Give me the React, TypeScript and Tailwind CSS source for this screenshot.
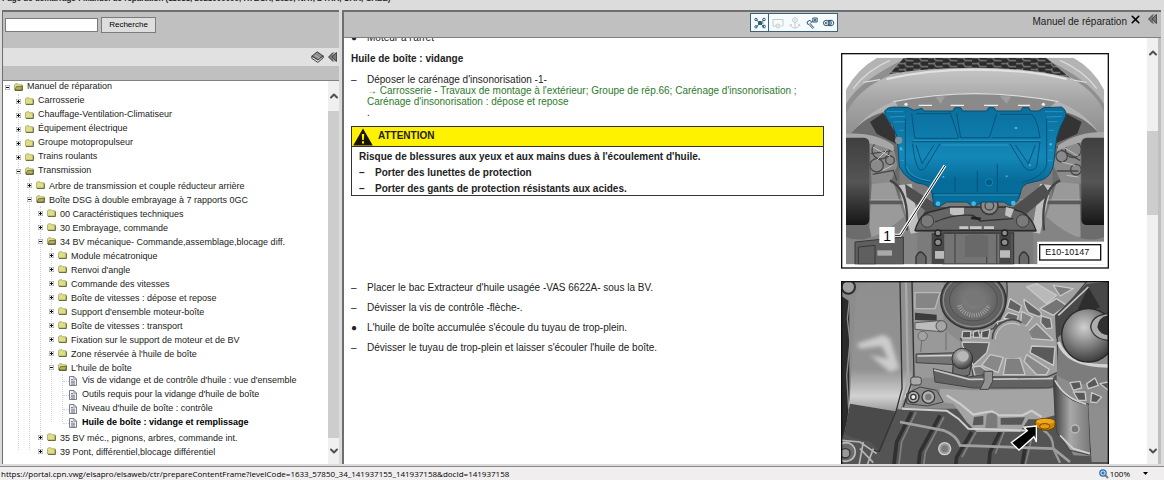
import type { ReactNode } from 'react';
import { useState } from 'react';
import { ChevronDown, ChevronUp, X } from 'lucide-react';

interface TreeNode {
    label: string;
    kind?: 'folder' | 'doc';
    children?: TreeNode[];
    selected?: boolean;
}

const TREE: TreeNode[] = [
    {
        label: 'Manuel de réparation',
        children: [
            { label: 'Carrosserie' },
            { label: 'Chauffage-Ventilation-Climatiseur' },
            { label: 'Équipement électrique' },
            { label: 'Groupe motopropulseur' },
            { label: 'Trains roulants' },
            {
                label: 'Transmission',
                children: [
                    { label: 'Arbre de transmission et couple réducteur arrière' },
                    {
                        label: 'Boîte DSG à double embrayage à 7 rapports 0GC',
                        children: [
                            { label: '00 Caractéristiques techniques' },
                            { label: '30 Embrayage, commande' },
                            {
                                label: '34 BV mécanique- Commande,assemblage,blocage diff.',
                                children: [
                                    { label: 'Module mécatronique' },
                                    { label: "Renvoi d'angle" },
                                    { label: 'Commande des vitesses' },
                                    { label: 'Boîte de vitesses : dépose et repose' },
                                    { label: "Support d'ensemble moteur-boîte" },
                                    { label: 'Boîte de vitesses : transport' },
                                    { label: 'Fixation sur le support de moteur et de BV' },
                                    { label: "Zone réservée à l'huile de boîte" },
                                    {
                                        label: "L'huile de boîte",
                                        children: [
                                            { label: "Vis de vidange et de contrôle d'huile : vue d'ensemble", kind: 'doc' },
                                            { label: "Outils requis pour la vidange d'huile de boîte", kind: 'doc' },
                                            { label: "Niveau d'huile de boîte : contrôle", kind: 'doc' },
                                            { label: 'Huile de boîte : vidange et remplissage', kind: 'doc', selected: true },
                                        ],
                                    },
                                ],
                            },
                            { label: '35 BV méc., pignons, arbres, commande int.' },
                            { label: '39 Pont, différentiel,blocage différentiel' },
                        ],
                    },
                ],
            },
        ],
    },
];

const FolderIcon = ({ open }: { open: boolean }) => (
    <svg viewBox="0 0 9 8" className="w-[9px] h-2 shrink-0">
        <path d="M0.5 2 L1.5 0.8 H4 L5 1.8 H8 V7 H0.5Z" fill="#dede84" stroke="#9c9c5a" strokeWidth="0.7" />
        <path d="M8.4 2.4 V7.5 H1" fill="none" stroke="#4c4c30" strokeWidth="0.8" />
        {open && <path d="M1 7 L2.4 3.6 H8.6 L7.6 7Z" fill="#b4b45c" stroke="#54542c" strokeWidth="0.7" />}
    </svg>
);

const DocIcon = () => (
    <svg viewBox="0 0 8 10" className="w-2 h-[10px] shrink-0">
        <path d="M0.5 0.5 H5 L7.5 3 V9.5 H0.5Z" fill="#f2f3f8" stroke="#6d7080" strokeWidth="0.9" />
        <path d="M4.8 0.6 V3.2 H7.4" fill="none" stroke="#6d7080" strokeWidth="0.7" />
        <path d="M2 3.5 H4 M2 5.2 H6 M2 6.8 H6 M2 8.2 H6" stroke="#4d5060" strokeWidth="0.7" />
    </svg>
);

const ExpandIcon = ({ open }: { open: boolean }) => (
    <svg viewBox="0 0 5 5" className="w-[5px] h-[5px] shrink-0">
        <rect x="0.3" y="0.3" width="4.4" height="4.4" fill="#fff" stroke="#9a9a9a" strokeWidth="0.6" />
        <path d={open ? 'M1 2.5H4' : 'M1 2.5H4M2.5 1V4'} stroke="#111" strokeWidth="1" />
    </svg>
);

const TreeItem = ({ node, level }: { node: TreeNode; level: number }) => {
    const [open, setOpen] = useState(true);
    const isDoc = node.kind === 'doc';
    const expanded = !!node.children && open;

    return (
        <li className="relative">
            <div className="flex h-[14px] items-start">
                {isDoc ? (
                    <span className="flex h-[14px] w-[22px] shrink-0 items-center justify-end pr-[5px]">
                        <span className="w-[6px] border-t border-dotted border-gray-300" />
                        <DocIcon />
                    </span>
                ) : (
                    <button
                        type="button"
                        aria-label={node.label}
                        aria-expanded={expanded}
                        onClick={() => setOpen(!open)}
                        className="flex h-[14px] w-[22px] shrink-0 items-center gap-1"
                    >
                        <ExpandIcon open={expanded} />
                        <FolderIcon open={expanded} />
                    </button>
                )}
                <a
                    href="#contenu"
                    className={`whitespace-nowrap ${isDoc || level < 2 ? 'leading-[12px]' : 'leading-[16px]'} ${node.selected ? 'font-bold text-black' : 'text-[#222]'}`}
                >
                    {node.label}
                </a>
            </div>
            {expanded && <TreeList nodes={node.children!} level={level + 1} />}
        </li>
    );
};

const TreeList = ({ nodes, level }: { nodes: TreeNode[]; level: number }) => (
    <ul className={`relative ${level > 0 ? 'ml-[11px] before:absolute before:top-0 before:bottom-2 before:left-[2px] before:border-l before:border-dotted before:border-gray-300' : ''}`}>
        {nodes.map((n) => (
            <TreeItem key={n.label} node={n} level={level} />
        ))}
    </ul>
);

// Scroll track with its two arrows; children is the space before and after the thumb
const ScrollBar = ({ children }: { children: ReactNode }) => (
    <div className="flex w-[11px] shrink-0 flex-col items-center bg-[#f0f0f0]" aria-hidden="true">
        <span className="flex h-[30px] shrink-0 items-center">
            <ChevronUp className="h-3 w-3 text-[#505050]" strokeWidth={4} />
        </span>
        <div className="flex w-full flex-1 flex-col">{children}</div>
        <span className="flex h-[26px] shrink-0 items-center">
            <ChevronDown className="h-3 w-3 text-[#505050]" strokeWidth={4} />
        </span>
    </div>
);

const CollapseIcon = () => (
    <svg viewBox="0 0 9 10" className="h-[10px] w-[9px]">
        <path d="M5 0.5 L0.5 5 L5 9.5 H8.5 V0.5Z" fill="#a0a0a0" />
        <path d="M5 0.5 L0.5 5 L5 9.5 M8.5 0.5 L4 5 L8.5 9.5Z" fill="#777" stroke="#444" strokeWidth="0.9" />
    </svg>
);

const BookIcon = () => (
    <svg viewBox="0 0 13 12" className="h-3 w-[13px]">
        <path d="M0.8 5.2 L6.2 0.8 L12.2 5 L7 9Z" fill="#8d8d8d" stroke="#333" strokeWidth="0.9" />
        <path d="M0.8 5.2 V7.4 L6.8 11.4 L12.2 7 V5 L7 9Z" fill="#ddd" stroke="#333" strokeWidth="0.9" />
        <path d="M4 4.2 L8.6 7" stroke="#bbb" strokeWidth="0.8" />
    </svg>
);

const TOOLS: { name: string; icon: ReactNode; off?: boolean }[] = [
    {
        name: 'Arborescence',
        icon: (
            <>
                <path d="M2.5 3 L6 6 L10 3 M6 6 L2.5 10 M6 6 L10 10 M6 6 H9.5" />
                <circle cx="2" cy="2.5" r="1.2" />
                <circle cx="6" cy="6" r="1.6" fill="currentColor" />
                <circle cx="10" cy="2.5" r="1.3" />
                <circle cx="2" cy="9.8" r="1.2" />
                <circle cx="10" cy="9.5" r="1.4" />
            </>
        ),
    },
    {
        name: 'Véhicule',
        off: true,
        icon: <path d="M3 9 H1 V2.5 H11 V9 H9.5 M4 9 a1.8 1.8 0 1 0 4 0 a1.8 1.8 0 1 0 -4 0 M4 9 H3 M5.5 9 H7" />,
    },
    {
        name: 'Ancrage',
        off: true,
        icon: (
            <>
                <circle cx="6" cy="3" r="2.4" />
                <path d="M5 3 H7 M6 5.4 V11 M1.5 7.5 C2 10 4 11 6 11 C8 11 10 10 10.5 7.5 M1 9 L1.5 7.5 L3 8 M11 9 L10.5 7.5 L9 8" />
            </>
        ),
    },
    {
        name: 'Outillage',
        icon: (
            <>
                <path d="M1 5 L4 3.2 L5.6 5.2 L4.2 6.6 L7.6 10.4 L6.6 11.4 L3 7.4 L1.6 7.2Z" />
                <path d="M6.8 1 H11.2 V5 H6.8Z M8.2 2.4 H9.8 V3.7 H8.2Z M6.8 4.4 L5.4 5.4" />
            </>
        ),
    },
    {
        name: 'Pièces',
        icon: (
            <>
                <circle cx="3.2" cy="6" r="2.7" />
                <circle cx="3.2" cy="6" r="0.9" />
                <path d="M5 3.4 A2.7 2.7 0 0 1 5 8.6 M6.4 3.4 A2.7 2.7 0 0 1 6.4 8.6 M8.8 3.4 A2.7 2.7 0 0 1 8.8 8.6 M5 3.4 H9 M5 8.6 H9" />
            </>
        ),
    },
];

const Toolbar = () => (
    <div className="flex h-[19px] border border-[#3b6277] bg-[#f6fbfd]">
        {TOOLS.map((t, i) => (
            <button
                key={t.name}
                type="button"
                aria-label={t.name}
                disabled={t.off}
                className={`flex items-center justify-center ${i === 0 ? 'w-[18px] border-r border-[#3b6277]' : 'w-[17px]'} ${t.off ? 'text-[#c6cacd]' : 'text-[#2f5870]'}`}
            >
                <svg viewBox="0 0 12 12" className="h-3 w-3" fill="none" stroke="currentColor" strokeWidth="1">
                    {t.icon}
                </svg>
            </button>
        ))}
    </div>
);

const UnderbodyFigure = () => (
    <svg viewBox="3 8 804 648" className="block w-full" role="img" aria-label="Carénage d'insonorisation">
        <defs>
            <linearGradient id="bumper" x1="0" y1="0" x2="0" y2="1">
                <stop offset="0" stopColor="#c6c6c6" />
                <stop offset="0.45" stopColor="#a4a4a4" />
                <stop offset="1" stopColor="#8b8b8b" />
            </linearGradient>
            <linearGradient id="plate" x1="0" y1="0" x2="0" y2="1">
                <stop offset="0" stopColor="#0a6f9e" />
                <stop offset="0.33" stopColor="#0f7dad" />
                <stop offset="0.5" stopColor="#1488b9" />
                <stop offset="0.75" stopColor="#066b98" />
                <stop offset="1" stopColor="#07709f" />
            </linearGradient>
            <linearGradient id="tyre" x1="0" y1="0" x2="0" y2="1">
                <stop offset="0" stopColor="#3f3f3f" />
                <stop offset="0.5" stopColor="#555" />
                <stop offset="1" stopColor="#161616" />
            </linearGradient>
            <pattern id="mesh" width="44" height="18" patternUnits="userSpaceOnUse">
                <rect width="44" height="18" fill="#2c2c2c" />
                <path d="M0 4 H18 L24 13 H44 M18 4 L24 -4 M0 13 L-4 18" stroke="#858585" strokeWidth="3.4" fill="none" />
            </pattern>
            <clipPath id="photo">
                <rect x="18" y="22" width="774" height="620" />
            </clipPath>
        </defs>
        <rect x="5" y="10" width="800" height="643" fill="#fff" stroke="#111" strokeWidth="4" />
        <g clipPath="url(#photo)">
            <rect x="18" y="180" width="774" height="462" fill="#7b7b7b" />
            <path d="M18 118 Q52 55 112 22 H700 Q760 55 792 118 V290 H18Z" fill="#b3b3b3" />
            <path d="M18 160 Q60 90 190 28 L150 75 Q60 110 18 200Z" fill="#8f8f8f" />
            <path d="M792 160 Q750 90 620 28 L690 80 Q750 110 792 200Z" fill="#8f8f8f" />
            <path d="M40 115 Q80 60 150 30 M770 115 Q730 60 660 30 M70 96 L120 88 M740 96 L690 88" stroke="#d9d9d9" strokeWidth="4" fill="none" />
            <path d="M192 22 H618 L690 82 Q560 52 405 52 Q250 52 148 72Z" fill="url(#mesh)" />
            <path d="M18 190 Q55 115 135 85 Q260 54 405 54 Q560 54 685 84 Q760 112 792 185 V275 Q750 190 650 152 Q520 126 405 126 Q290 126 165 152 Q65 190 18 275Z" fill="url(#bumper)" />
            <path d="M140 86 Q260 58 405 58 Q560 58 680 86" stroke="#e2e2e2" strokeWidth="6" fill="none" />
            <path d="M165 150 Q290 128 405 128 Q530 128 650 152 L620 182 H180Z" fill="#8a8a8a" />
            <path d="M160 154 Q290 130 405 130 Q530 130 655 154" stroke="#dadada" strokeWidth="4" fill="none" />
            <path d="M285 138 L315 138 L302 160Z M480 138 L515 138 L500 160Z" fill="#9f9f9f" />
            {/* wheel housings */}
            <path d="M18 270 Q60 205 130 185 Q170 230 178 300 L180 640 H18Z" fill="#6c6c6c" />
            <path d="M792 270 Q750 205 675 185 Q650 230 640 300 L630 640 H792Z" fill="#6c6c6c" />
            <path d="M90 215 L130 188 L165 245 L168 280 L110 250Z M725 215 L680 190 L648 250 L645 280 L712 250Z" fill="#343434" />
            <path d="M88 270 L160 285 L172 345 L150 400 L95 400Z M722 270 L655 285 L640 345 L665 400 L722 400Z" fill="#8a8a8a" />
            <g fill="none" stroke="#484848" strokeWidth="4">
                <circle cx="122" cy="300" r="26" />
                <circle cx="110" cy="345" r="20" />
                <circle cx="150" cy="330" r="13" />
                <circle cx="700" cy="298" r="24" />
                <circle cx="665" cy="318" r="17" />
                <circle cx="708" cy="358" r="16" />
                <path d="M92 310 L165 300 M98 372 L160 360 L170 390 M650 290 L720 330 M650 362 H715" />
            </g>
            <g stroke="#c0c0c0" strokeWidth="3" fill="none">
                <path d="M98 290 L150 318 M110 330 L140 300 M128 360 L158 345 M670 290 L715 318 M665 335 L705 345 M680 375 L715 380" />
            </g>
            <path d="M18 250 Q110 245 160 285 L162 305 Q100 270 18 276Z" fill="#a7a7a7" />
            <path d="M792 245 Q710 245 655 285 L652 302 Q710 270 792 268Z" fill="#a7a7a7" />
            <path d="M95 400 L160 395 L200 520 L160 560 Q120 575 95 565 L88 530Z" fill="#9a9a9a" />
            <path d="M718 400 L650 395 L615 510 L650 560 Q700 575 722 560Z" fill="#9a9a9a" />
            <path d="M88 450 H270 V462 H88Z M540 450 H725 V462 H540Z" fill="#5a5a5a" />
            <path d="M88 449 H270 M540 449 H725" stroke="#bdbdbd" strokeWidth="2" />
            <rect x="5" y="262" width="83" height="262" rx="16" fill="url(#tyre)" />
            <rect x="724" y="262" width="84" height="262" rx="16" fill="url(#tyre)" />
            {/* lower floor */}
            <path d="M18 560 Q90 590 190 500 L232 550 V642 H18Z" fill="#848484" />
            <path d="M792 560 Q720 590 620 500 L580 550 V642 H792Z" fill="#848484" />
            <path d="M45 575 L190 560 V642 H45Z M55 590 L105 585 V642 H55Z" fill="#5f5f5f" stroke="#383838" strokeWidth="3" />
            <rect x="112" y="600" width="44" height="16" fill="#aaa" />
            <path d="M175 405 L215 400 L240 545 L212 550Z M635 405 L600 400 L575 545 L600 550Z" fill="#c0c0c0" />
            <path d="M150 390 Q210 420 200 540 M660 390 Q600 420 612 540" stroke="#444" strokeWidth="7" fill="none" />
            <path d="M195 400 L300 470 H520 L610 400 L630 430 L560 490 L590 545 H225 L255 480 L200 440Z" fill="#4f4f4f" />
            <path d="M225 540 Q240 490 270 485 L330 470 H500 L545 485 Q575 500 588 540Z" fill="#666" stroke="#2c2c2c" strokeWidth="4" />
            <circle cx="262" cy="512" r="19" fill="#7a7a7a" stroke="#3c3c3c" strokeWidth="3" />
            <circle cx="548" cy="512" r="19" fill="#7a7a7a" stroke="#3c3c3c" strokeWidth="3" />
            <path d="M330 472 H372 V492 Q350 500 330 490Z M498 470 L522 476 L512 502 L495 495Z" fill="#c2c2c2" />
            <path d="M285 515 Q340 490 400 495 L420 512 L520 505" stroke="#333" strokeWidth="4" fill="none" />
            <path d="M358 528 H385 V536 H358Z M390 528 H425 V536 H390Z M432 528 H462 V536 H432Z" fill="#c8c8c8" />
            <path d="M396 498 L424 502 L420 510 L392 506Z" fill="#222" />
            <path d="M310 548 H520 V642 H310Z" fill="#747474" stroke="#353535" strokeWidth="5" />
            <path d="M345 550 V642 M375 560 H440 V642 M470 548 V642" stroke="#4b4b4b" strokeWidth="4" fill="none" />
            <path d="M375 558 Q410 546 445 558 V620 H375Z" fill="#696969" />
            <path d="M275 548 H312 V642 H275Z M478 548 H515 V642 H478Z" fill="#474747" />
            <g fill="#8c8c8c" stroke="#222" strokeWidth="4">
                <circle cx="294" cy="548" r="9" />
                <circle cx="294" cy="576" r="10" />
                <circle cx="494" cy="548" r="9" />
                <circle cx="494" cy="576" r="10" />
            </g>
            <path d="M228 642 V620 Q240 590 258 620 V642 M538 642 V620 Q550 590 566 620 V642" fill="#686868" stroke="#333" strokeWidth="4" />
            <path d="M285 602 H312 V625 H285Z M480 600 H510 V622 H480Z" fill="#bababa" />
            <circle cx="448" cy="466" r="26" fill="#8b8b8b" stroke="#3c3c3c" strokeWidth="5" />
            <circle cx="448" cy="466" r="13" fill="none" stroke="#444" strokeWidth="4" />
            {/* protection plate */}
            <path
                d="M134 182 Q142 170 165 170 L205 172 L222 180 L246 174 L252 182 H338 L344 172 H362 L368 182 H440 L446 172 H462 L468 182 H542 L548 172 H566 L572 182 H596 L612 172 L664 170 Q680 178 677 198 Q660 225 650 262 L640 345 Q632 378 608 388 L560 400 Q542 410 542 428 Q534 462 508 466 L492 455 H425 L410 466 H395 L380 455 H320 L300 468 H282 L276 430 Q272 408 252 402 Q205 398 178 350 L172 262 L158 225 Q134 205 134 182Z"
                fill="url(#plate)"
                stroke="#064f70"
                strokeWidth="3"
            />
            <g fill="none" stroke="#07557a" strokeWidth="3">
                <path d="M196 205 V352 Q205 388 270 396 M620 205 V345 Q610 380 548 396" />
                <path d="M215 190 Q222 250 225 264 H350 L356 262 L330 186 M228 190 H330 M350 188 L362 262 H448 L470 190 M480 192 H575 Q590 200 600 262 H455" />
                <path d="M215 274 H600 L590 350 Q570 370 552 350 L510 280 M218 280 Q222 330 236 356 Q246 365 256 352 L300 280" />
                <path d="M228 284 L246 340 L282 284 M526 284 L565 340 L586 284" />
                <path d="M276 430 H542 M345 380 V425 M412 362 V425 M472 340 V425" />
            </g>
            <g fill="none" stroke="#3aa6d0" strokeWidth="2">
                <path d="M140 184 H190 M148 200 L195 198 M160 215 L195 214 M615 184 H668 M620 200 L665 198 M622 214 L652 214" />
                <path d="M218 270 H602 M305 284 H505 M200 350 Q210 384 272 392 M282 434 H536 M178 240 H192 M178 300 H192 M180 330 H192 M626 240 H642 M626 300 H640 M624 330 H638" />
            </g>
            <g fill="#4db4dc">
                <circle cx="528" cy="233" r="4" />
                <circle cx="294" cy="460" r="7" />
                <circle cx="401" cy="460" r="7" />
                <circle cx="520" cy="458" r="7" />
                <circle cx="310" cy="379" r="3" />
                <circle cx="500" cy="378" r="3" />
                <circle cx="570" cy="345" r="3" />
                <circle cx="632" cy="282" r="4" />
                <circle cx="183" cy="295" r="4" />
            </g>
            <circle cx="447" cy="396" r="11" fill="#055a82" stroke="#0b8dc0" strokeWidth="3" />
            <circle cx="176" cy="270" r="11" fill="#7c949e" />
            <path d="M236 165 H276 M332 165 H372 M432 165 H474 M534 165 H570" stroke="#eee" strokeWidth="4" />
            <circle cx="198" cy="162" r="5" fill="#eee" />
            <circle cx="610" cy="162" r="5" fill="#eee" />
            <path d="M165 555 H180 L315 346" fill="none" stroke="#fff" strokeWidth="9" />
            <path d="M165 555 H181 L315 346" fill="none" stroke="#111" strokeWidth="3" />
        </g>
        <rect x="118" y="530" width="46" height="48" fill="#fff" />
        <text x="130" y="571" fontSize="42" fill="#000" className="font-['Liberation_Sans',Arial,sans-serif]">1</text>
        <rect x="592" y="574" width="200" height="68" fill="#fff" />
        <rect x="599" y="583" width="183" height="46" fill="#fff" stroke="#111" strokeWidth="4" />
        <text x="616" y="615" fontSize="27" fill="#111" className="font-['Liberation_Sans',Arial,sans-serif]">E10-10147</text>
    </svg>
);

const GearboxFigure = () => (
    <svg viewBox="3 17 804 648" className="block w-full" role="img" aria-label="Vis de contrôle de la boîte">
        <defs>
            <linearGradient id="cover" x1="0" y1="0" x2="0" y2="1">
                <stop offset="0" stopColor="#8f8f8f" />
                <stop offset="0.55" stopColor="#929292" />
                <stop offset="0.72" stopColor="#d2d2d2" />
                <stop offset="0.84" stopColor="#8c8c8c" />
                <stop offset="1" stopColor="#555" />
            </linearGradient>
            <radialGradient id="ball" cx="0.42" cy="0.35" r="0.7">
                <stop offset="0" stopColor="#d0d0d0" />
                <stop offset="0.5" stopColor="#828282" />
                <stop offset="1" stopColor="#333" />
            </radialGradient>
            <radialGradient id="disc" cx="0.5" cy="0.5" r="0.5">
                <stop offset="0" stopColor="#858585" />
                <stop offset="0.5" stopColor="#707070" />
                <stop offset="0.9" stopColor="#5c5c5c" />
                <stop offset="1" stopColor="#4a4a4a" />
            </radialGradient>
            <linearGradient id="tube" x1="0" y1="0" x2="1" y2="0">
                <stop offset="0" stopColor="#3a3a3a" />
                <stop offset="0.45" stopColor="#a8a8a8" />
                <stop offset="1" stopColor="#777" />
            </linearGradient>
            <filter id="soft">
                <feGaussianBlur stdDeviation="6" />
            </filter>
        </defs>
        <rect x="5" y="19" width="800" height="643" fill="#8c8c8c" />
        {/* lower ribs */}
        <path d="M160 400 H640 L700 540 L805 545 V662 H5 V470Z" fill="#545454" />
        <path d="M215 410 L170 500 L150 662 M300 420 L240 530 L225 662 M395 470 L350 545 L335 662 M480 470 L450 530 L440 662 M560 490 L530 662" stroke="#303030" strokeWidth="11" fill="none" />
        <path d="M228 410 L185 500 L165 662 M312 425 L256 530 L240 662 M408 470 L366 545 M492 470 L466 535 M575 490 L548 600" stroke="#808080" strokeWidth="5" fill="none" />
        <path d="M180 440 L310 465 Q350 480 360 510 L640 520 L690 560" stroke="#a0a0a0" strokeWidth="8" fill="none" />
        <circle cx="314" cy="520" r="18" fill="#9b9b9b" stroke="#d0d0d0" strokeWidth="4" />
        <circle cx="314" cy="520" r="10" fill="#7b7b7b" />
        {/* left cover */}
        <path d="M5 60 L28 75 V400 Q20 450 10 480 L5 490Z" fill="#2b2b2b" />
        <path d="M5 60 L28 75 L22 130 L30 200 L20 300 L26 400" stroke="#8d8d8d" strokeWidth="4" fill="none" />
        <path d="M48 50 L80 20 H200 L218 260 L214 340 L168 408 L100 495 Q30 500 18 470 L30 360Z" fill="url(#cover)" />
        <path d="M30 385 L165 408 L118 528 L90 498 Q20 490 14 470Z" fill="#4a4a4a" />
        <path d="M180 20 L186 340 L168 408 L118 528 L100 525 M216 20 L222 300 L190 395" stroke="#333" strokeWidth="4" fill="none" />
        <path d="M198 20 L204 320 L178 402" stroke="#a9a9a9" strokeWidth="7" fill="none" />
        <path d="M50 205 L130 178 L150 190 L178 280 L150 290 L90 240 L145 250 L125 212 L60 220Z" fill="#e0e0e0" opacity="0.75" filter="url(#soft)" />
        <circle cx="25" cy="35" r="20" fill="#a0a0a0" stroke="#2e2e2e" strokeWidth="6" />
        <g stroke="#b4b4b4" strokeWidth="5" fill="none">
            <path d="M5 495 L60 500 L110 535 M60 520 L100 562 M70 500 L40 662 M100 520 L70 600" />
        </g>
        <circle cx="18" cy="530" r="28" fill="#6c6c6c" stroke="#bcbcbc" strokeWidth="5" />
        <circle cx="16" cy="534" r="14" fill="#999" stroke="#333" strokeWidth="4" />
        {/* casting behind the disc */}
        <path d="M220 19 H310 V160 L360 200 V300 L225 310Z" fill="#999" />
        <path d="M225 52 H300 L285 100 H225Z" fill="#858585" stroke="#b8b8b8" strokeWidth="4" />
        <path d="M225 112 L290 118 V136 L225 134Z" fill="#3c3c3c" />
        <path d="M225 142 L300 136 Q322 145 320 158 Q312 174 290 168 L225 162Z" fill="#bcbcbc" stroke="#5a5a5a" strokeWidth="3" />
        <circle cx="304" cy="152" r="16" fill="#a5a5a5" stroke="#555" strokeWidth="3" />
        <circle cx="248" cy="182" r="14" fill="#a2a2a2" stroke="#6b6b6b" strokeWidth="3" />
        <path d="M245 195 L242 230 M318 170 V225" stroke="#6d6d6d" strokeWidth="3" />
        {/* ribbed housing */}
        <path d="M500 19 H740 L650 130 L655 290 L620 305 H400 L395 270 L362 190 L460 160 Q510 100 500 19Z" fill="#a0a0a0" stroke="#444" strokeWidth="4" />
        <g fill="#626262" stroke="#c8c8c8" strokeWidth="4" strokeLinejoin="round">
            <path d="M552 72 L600 108 Q610 120 596 124 L566 112 Q552 95 552 72Z" />
            <path d="M604 122 L632 130 L636 158 L618 160 L602 142Z" />
            <path d="M510 70 L545 92 L538 112 L502 98Z" />
            <path d="M505 112 L535 120 L530 138 L490 128Z" />
            <path d="M545 108 L578 125 L558 152 L542 145Z" fill="#858585" />
            <path d="M590 145 L640 195 L575 190 L562 170Z" fill="#808080" />
            <path d="M575 212 L645 215 L640 270 L570 232Z" fill="#5a5a5a" />
            <path d="M560 238 L628 282 L618 298 L590 298 L552 258Z" fill="#8a8a8a" />
            <path d="M498 248 H540 L555 298 H490Z" fill="#808080" />
            <path d="M450 238 L490 246 L474 292 L425 270Z" fill="#888" />
            <path d="M366 200 L448 202 L440 232 L400 270 L368 212Z" fill="#5a5a5a" />
            <path d="M398 275 L420 272 L460 300 H405Z" fill="#757575" />
            <path d="M368 168 H392 V188 H366Z M400 170 L415 165 L420 186 H400Z M425 168 L450 162 L445 188 H425Z" fill="#505050" />
            <path d="M470 140 L500 132 L530 142 L505 150 L480 160Z" />
            <path d="M560 35 L590 25 L650 60 L620 85Z" fill="#b9b9b9" />
            <path d="M600 100 L650 70 L680 90 L640 120Z" fill="#757575" />
            <path d="M640 30 L700 40 L660 62Z" fill="#808080" />
        </g>
        <circle cx="515" cy="192" r="58" fill="#9f9f9f" />
        <path d="M457 192 A58 58 0 0 1 545 142" fill="none" stroke="#4a4a4a" strokeWidth="5" />
        <path d="M466 192 A50 50 0 0 1 540 150" fill="none" stroke="#ccc" strokeWidth="3" />
        <ellipse cx="400" cy="75" rx="98" ry="87" fill="url(#disc)" stroke="#333" strokeWidth="4" />
        <ellipse cx="400" cy="75" rx="90" ry="79" fill="none" stroke="#8c8c8c" strokeWidth="4" />
        <ellipse cx="400" cy="75" rx="72" ry="62" fill="none" stroke="#505050" strokeWidth="3" />
        <path d="M358 90 A46 42 0 0 0 446 90" fill="none" stroke="#a0a0a0" strokeWidth="14" strokeDasharray="3 4" />
        <ellipse cx="404" cy="68" rx="27" ry="25" fill="#777" />
        {/* lever and round cap */}
        <path d="M228 236 L350 232 V268 L228 262Z" fill="#757575" stroke="#444" strokeWidth="3" />
        <path d="M232 242 L345 240" stroke="#d0d0d0" strokeWidth="5" />
        <path d="M340 250 H397 L388 298 Q360 312 338 296Z" fill="#707070" stroke="#333" strokeWidth="3" />
        <circle cx="367" cy="250" r="31" fill="url(#ball)" stroke="#333" strokeWidth="3" />
        <circle cx="370" cy="243" r="16" fill="#b8b8b8" />
        <path d="M280 280 L385 305 L450 295 V310 H640 L648 300 V325 Q640 340 610 338 H400 L285 320Z" fill="#626262" stroke="#444" strokeWidth="3" />
        <path d="M282 284 L388 312 L640 310" stroke="#c8c8c8" strokeWidth="5" fill="none" />
        <path d="M432 288 H458 V318 L445 342 H420 L432 318Z" fill="#929292" stroke="#444" strokeWidth="3" />
        {/* oil pan wall */}
        <path d="M300 340 L400 345 L640 340 L645 420 L600 432 H565 L540 470 H410 L380 440 L340 385 L300 380Z" fill="#a4a4a4" />
        <path d="M185 400 L320 406 L355 430 L385 460 L580 466" stroke="#cfcfcf" strokeWidth="6" fill="none" />
        <path d="M320 360 L360 385 L400 418 L430 412 L455 408 L475 420 L548 420 L575 406 L605 425" stroke="#ccc" strokeWidth="7" fill="none" strokeLinejoin="round" />
        <path d="M402 425 L430 422 V448 L398 450Z M482 428 L555 426 L545 448 H482Z" fill="#585858" />
        <path d="M440 418 Q455 406 472 420 V458 H436Z" fill="#7b7b7b" />
        <path d="M240 335 L290 345 L310 380 L262 392 L200 385 V355Z" fill="#8a8a8a" stroke="#444" strokeWidth="3" />
        <circle cx="220" cy="365" r="17" fill="#b5b5b5" stroke="#333" strokeWidth="4" />
        <circle cx="220" cy="365" r="8" fill="#eee" stroke="#333" strokeWidth="4" />
        <circle cx="265" cy="365" r="19" fill="#b1b1b1" stroke="#3a3a3a" strokeWidth="4" />
        <circle cx="265" cy="365" r="10" fill="#7c7c7c" />
        <rect x="212" y="305" width="32" height="24" rx="8" fill="#aaa" stroke="#444" strokeWidth="3" />
        {/* drive flange on the right */}
        <path d="M740 25 L805 19 V120 L700 150 L648 190 L645 120Z" fill="#484848" />
        <path d="M745 35 L780 95 L700 130Z" fill="#2e2e2e" />
        <path d="M745 35 L655 120" stroke="#c8c8c8" strokeWidth="5" />
        <path d="M655 215 Q690 280 805 275 V330 L700 325 L650 300Z" fill="#7c7c7c" />
        <path d="M655 200 Q680 272 805 272" stroke="#d2d2d2" strokeWidth="10" fill="none" />
        <circle cx="745" cy="180" r="80" fill="url(#ball)" stroke="#2a2a2a" strokeWidth="4" />
        <path d="M805 115 Q755 120 752 155 Q758 190 805 195Z" fill="#adadad" stroke="#333" strokeWidth="4" />
        <path d="M805 120 Q775 125 772 155 Q778 178 805 180Z" fill="#303030" />
        <g fill="#777" stroke="#c8c8c8" strokeWidth="4" strokeLinejoin="round">
            <path d="M690 322 L720 318 L725 338 L700 345Z M740 325 L765 308 L775 330 L745 340Z M700 350 L735 350 L738 375 L715 375Z M755 352 L785 365 L770 382 L752 380Z M780 325 L805 320 V345Z" fill="#585858" />
        </g>
        <path d="M640 310 Q668 370 725 385 L745 385 L752 540 L690 525 L650 470 L645 420Z" fill="url(#tube)" stroke="#444" strokeWidth="3" />
        <path d="M745 390 L805 400 V560 H755Z" fill="#8e8e8e" />
        <path d="M645 315 Q672 368 738 386 M660 480 L700 520 L750 535" stroke="#d0d0d0" strokeWidth="5" fill="none" />
        <circle cx="705" cy="461" r="12" fill="#777" stroke="#bbb" strokeWidth="4" />
        <path d="M610 465 Q640 480 640 520 L660 562" stroke="#999" strokeWidth="7" fill="none" />
        {/* inspection screw */}
        <path d="M585 440 Q595 428 617 430 Q640 428 646 440 L644 456 Q628 468 606 464 L588 456Z" fill="#cf8600" stroke="#6b4500" strokeWidth="3" />
        <ellipse cx="616" cy="438" rx="27" ry="8" fill="#f0a818" />
        <ellipse cx="614" cy="453" rx="15" ry="8" fill="#e79b10" stroke="#6b4500" strokeWidth="3" />
        <path d="M589 452 L552 456 L562 466 L514 502 L537 524 L582 484 L589 500Z" fill="#000" stroke="#fff" strokeWidth="4" />
        <rect x="5" y="19" width="800" height="643" fill="none" stroke="#111" strokeWidth="4" />
    </svg>
);

const Step = ({ mark, children }: { mark: string; children: ReactNode }) => (
    <li className="flex">
        <span className="w-4 shrink-0">{mark}</span>
        <div>{children}</div>
    </li>
);

const App = () => {
    const [query, setQuery] = useState('');

    return (
        <div className="flex h-screen flex-col overflow-hidden bg-[#dcdcdc] font-['Liberation_Sans',Arial,sans-serif] text-[10px] text-[#222]">
            <header className="flex h-[10px] shrink-0 items-end overflow-hidden px-[2px]">
                <h1 className="pb-[5px] text-[8px] leading-[12px] font-bold whitespace-nowrap">
                    Page de démarrage : Manuel de réparation (11633, 2021000000, H7BCA, 2020, NAT, DTRA, UAA, CAEE)
                </h1>
            </header>

            <div className="flex min-h-0 flex-1 gap-[3px] pr-[3px] pl-[2px]">
                {/* Navigation pane */}
                <aside className="flex w-[337px] shrink-0 flex-col border-t-2 border-l border-[#6e6e6e] bg-[#c0c0c0]">
                    <form className="flex h-9 shrink-0 items-center gap-[3px] px-[2px] pb-[11px]" onSubmit={(e) => e.preventDefault()}>
                        <input
                            type="text"
                            aria-label="Recherche"
                            value={query}
                            onChange={(e) => setQuery(e.target.value)}
                            className="h-[14px] w-[93px] border border-[#7b7b7b] bg-white px-1"
                        />
                        <button type="submit" className="h-4 w-[55px] border border-[#7b7b7b] bg-[#dedede] text-[8px] leading-[12px] text-black">
                            Recherche
                        </button>
                    </form>
                    <div className="flex h-[18px] shrink-0 items-center justify-end gap-1 bg-[#e1e1e1] pr-[2px] pb-px">
                        <button type="button" aria-label="Catalogue">
                            <BookIcon />
                        </button>
                        <button type="button" aria-label="Réduire le panneau">
                            <CollapseIcon />
                        </button>
                    </div>
                    <div className="h-[15px] shrink-0 border-b border-[#808080]" />
                    <div className="flex min-h-0 flex-1 bg-white">
                        <nav className="min-w-0 flex-1 overflow-hidden pl-[2px] text-[9px]">
                            <div className="-mt-px">
                                <TreeList nodes={TREE} level={0} />
                            </div>
                        </nav>
                        <ScrollBar>
                            <div className="flex-1 bg-[#cdcdcd]" />
                        </ScrollBar>
                    </div>
                </aside>

                {/* Document pane */}
                <main id="contenu" className="flex min-w-0 flex-1 flex-col border-t-2 border-l-2 border-[#6e6e6e] bg-white">
                    <div className="flex h-[26px] shrink-0 items-start justify-end border-b border-[#808080] bg-[#c0c0c0] pt-px">
                        <Toolbar />
                        <div className="flex w-[323px] items-start justify-end gap-[2px] pr-1">
                            <span className="leading-[18px]">Manuel de réparation</span>
                            <button type="button" aria-label="Fermer">
                                <X className="h-[13px] w-[13px] text-black" strokeWidth={3} />
                            </button>
                            <button type="button" aria-label="Réduire" className="pt-px pl-1">
                                <CollapseIcon />
                            </button>
                        </div>
                    </div>
                    <div className="flex min-h-0 flex-1 border-r-[3px] border-[#c0c0c0]">
                        <div className="min-w-0 flex-1 overflow-hidden pr-[38px] pl-[7px] leading-[12px]">
                            <ul className="-mt-[6px] h-[21px]">
                                <Step mark="●">Moteur à l'arrêt</Step>
                            </ul>
                            <section className="flex min-h-[228px] gap-[17px]">
                                <div className="min-w-0 flex-1">
                                    <h2 className="font-bold">Huile de boîte : vidange</h2>
                                    <ul className="mt-[9px] leading-[11px]">
                                        <Step mark="–">
                                            <p>Déposer le carénage d'insonorisation -1-</p>
                                            <a href="#carrosserie" className="text-[#2c7a2c]">
                                                → Carrosserie - Travaux de montage à l'extérieur; Groupe de rép.66; Carénage d'insonorisation ;
                                                <br />
                                                Carénage d'insonorisation : dépose et repose
                                            </a>
                                            <p>.</p>
                                        </Step>
                                    </ul>
                                    <div className="mt-2 border border-[#333] font-bold">
                                        <div className="flex h-5 items-start gap-[5px] border-b border-[#333] bg-[#fff200] pl-px">
                                            <svg viewBox="0 0 20 18" className="mt-px h-[18px] w-5">
                                                <path d="M10 0.5 L19.8 17.5 H0.2Z" fill="#1b1200" />
                                                <path d="M8.8 6 H11.2 L10.8 12 H9.2Z M9 13.2 H11 V15.4 H9Z" fill="#fff200" />
                                            </svg>
                                            <h3 className="leading-[18px]">ATTENTION</h3>
                                        </div>
                                        <div className="px-[7px] pt-1">
                                            <p>Risque de blessures aux yeux et aux mains dues à l'écoulement d'huile.</p>
                                            <ul className="mt-1 flex flex-col gap-1">
                                                <Step mark="–">Porter des lunettes de protection</Step>
                                                <Step mark="–">Porter des gants de protection résistants aux acides.</Step>
                                            </ul>
                                        </div>
                                    </div>
                                </div>
                                <figure className="w-[268px] shrink-0">
                                    <UnderbodyFigure />
                                </figure>
                            </section>
                            <section className="flex gap-[17px]">
                                <ul className="flex min-w-0 flex-1 flex-col gap-2 pt-px">
                                    <Step mark="–">Placer le bac Extracteur d'huile usagée -VAS 6622A- sous la BV.</Step>
                                    <Step mark="–">Dévisser la vis de contrôle -flèche-.</Step>
                                    <Step mark="●">L'huile de boîte accumulée s'écoule du tuyau de trop-plein.</Step>
                                    <Step mark="–">Dévisser le tuyau de trop-plein et laisser s'écouler l'huile de boîte.</Step>
                                </ul>
                                <figure className="w-[268px] shrink-0">
                                    <GearboxFigure />
                                </figure>
                            </section>
                        </div>
                        <ScrollBar>
                            <div className="h-[63px]" />
                            <div className="h-[84px] bg-[#cdcdcd]" />
                        </ScrollBar>
                    </div>
                </main>
            </div>

            <footer className="mt-[2px] flex h-[14px] shrink-0 items-center justify-between border-t border-[#8a8a8a] bg-[#f0eeee] pr-4 pl-px font-['Open_Sans','Noto_Sans',sans-serif] text-[8px] leading-[12px] text-black">
                <span>https://portal.cpn.vwg/elsapro/elsaweb/ctr/prepareContentFrame?levelCode=1633_57850_34_141937155_141937158&amp;docId=141937158</span>
                <button type="button" className="flex items-center gap-px">
                    <svg viewBox="0 0 10 10" className="h-[10px] w-[10px]">
                        <path d="M6 6 L9 9" stroke="#7a7a7a" strokeWidth="2" />
                        <circle cx="4" cy="4" r="3.2" fill="#cfe6fa" stroke="#2b6cb0" strokeWidth="1.2" />
                        <path d="M2.4 4 H5.6 M4 2.4 V5.6" stroke="#1c4f91" strokeWidth="1" />
                    </svg>
                    <span>100%</span>
                    <svg viewBox="0 0 5 3" className="ml-3 h-[3px] w-[5px]">
                        <path d="M0 0 H5 L2.5 3Z" fill="#000" />
                    </svg>
                </button>
            </footer>
        </div>
    );
};

export default App;
